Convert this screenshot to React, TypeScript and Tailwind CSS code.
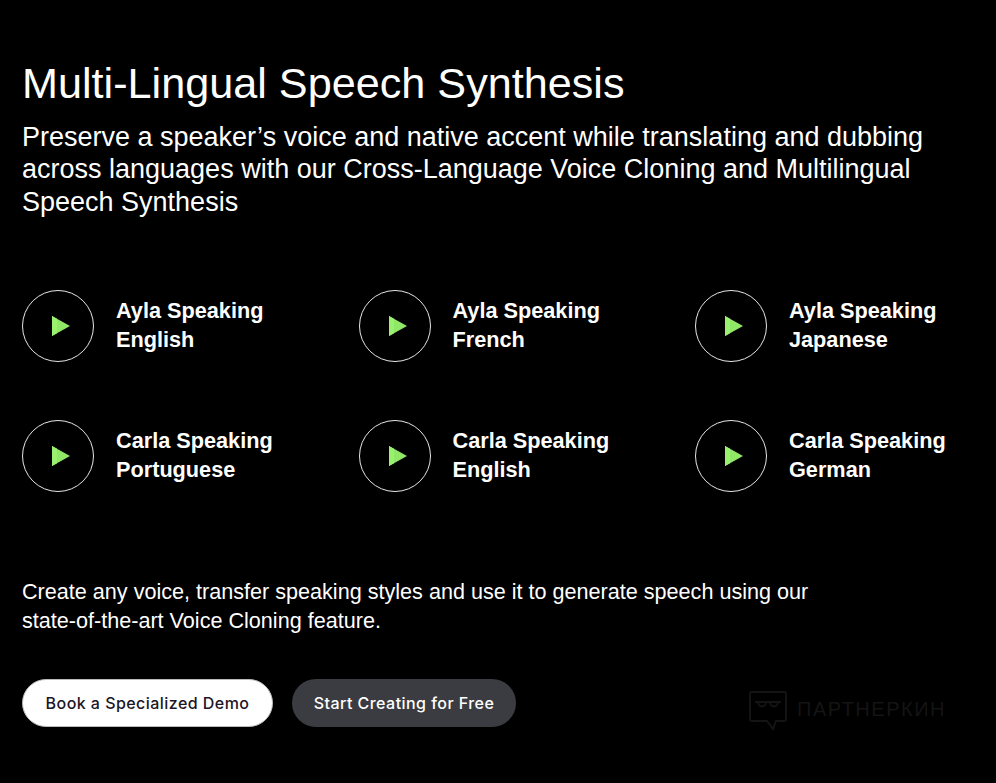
const voices = [
  { name: 'Ayla Speaking', lang: 'English' },
  { name: 'Ayla Speaking', lang: 'French' },
  { name: 'Ayla Speaking', lang: 'Japanese' },
  { name: 'Carla Speaking', lang: 'Portuguese' },
  { name: 'Carla Speaking', lang: 'English' },
  { name: 'Carla Speaking', lang: 'German' },
];

function VoiceItem({ name, lang }: { name: string; lang: string }) {
  return (
    <div className="flex items-center gap-[22px]">
      <button className="flex h-[72px] w-[72px] shrink-0 items-center justify-center rounded-full border border-[#e6e6e6]">
        <svg width="18" height="20" viewBox="0 0 18 20" className="ml-[6px]">
          <polygon points="0,0 18,10 0,20" fill="#8fe866" />
          <polygon points="0,0 5,2.8 5,17.2 0,20" fill="#9cf070" />
        </svg>
      </button>
      <div className="mb-[2px] text-[21.7px] leading-[29px] font-bold text-white">
        {name}
        <br />
        {lang}
      </div>
    </div>
  );
}

export default function App() {
  return (
    <div className="relative h-[783px] w-[996px] overflow-hidden bg-black pt-[58px] pl-[22px] font-['Liberation_Sans',Arial,sans-serif] text-white">
      <h1 className="text-[43.2px] leading-[50px]">Multi-Lingual Speech Synthesis</h1>
      <p className="mt-[13px] w-[930px] text-[27px] leading-[32.4px]">
        Preserve a speaker’s voice and native accent while translating and dubbing across languages with our Cross-Language Voice Cloning and Multilingual Speech Synthesis
      </p>

      <div className="mt-[72px] grid grid-cols-[336.5px_336.5px_1fr] gap-y-[58px]">
        {voices.map((v) => (
          <VoiceItem key={v.name + v.lang} name={v.name} lang={v.lang} />
        ))}
      </div>

      <p className="mt-[85px] w-[820px] text-[21.6px] leading-[29px]">
        Create any voice, transfer speaking styles and use it to generate speech using our state-of-the-art Voice Cloning feature.
      </p>

      <div className="mt-[44px] flex gap-[19px] font-['Inter',sans-serif] text-[16px] font-medium tracking-[0.45px]">
        <button className="h-[48px] w-[251px] rounded-[25px] border border-[#bbbbbb] bg-white text-[#1c1626]">Book a Specialized Demo</button>
        <button className="h-[48px] w-[224px] rounded-[25px] bg-[#3a3c41] text-white">Start Creating for Free</button>
      </div>

      {/* watermark */}
      <div className="absolute top-[690px] left-[749px] flex items-center gap-[10px] text-[#141414]">
        <svg width="38" height="42" viewBox="0 0 38 42" fill="none" stroke="currentColor" strokeWidth="2">
          <path d="M3 2h32a2 2 0 0 1 2 2v25a2 2 0 0 1-2 2H27l-3 8-6-8H3a2 2 0 0 1-2-2V4a2 2 0 0 1 2-2z" />
          <path d="M6 12h26M9 12c0 6 8 6 8 0M21 12c0 6 8 6 8 0" />
        </svg>
        <span className="mb-[4px] text-[20px] tracking-[1.5px]">ПАРТНЕРКИН</span>
      </div>
    </div>
  );
}
